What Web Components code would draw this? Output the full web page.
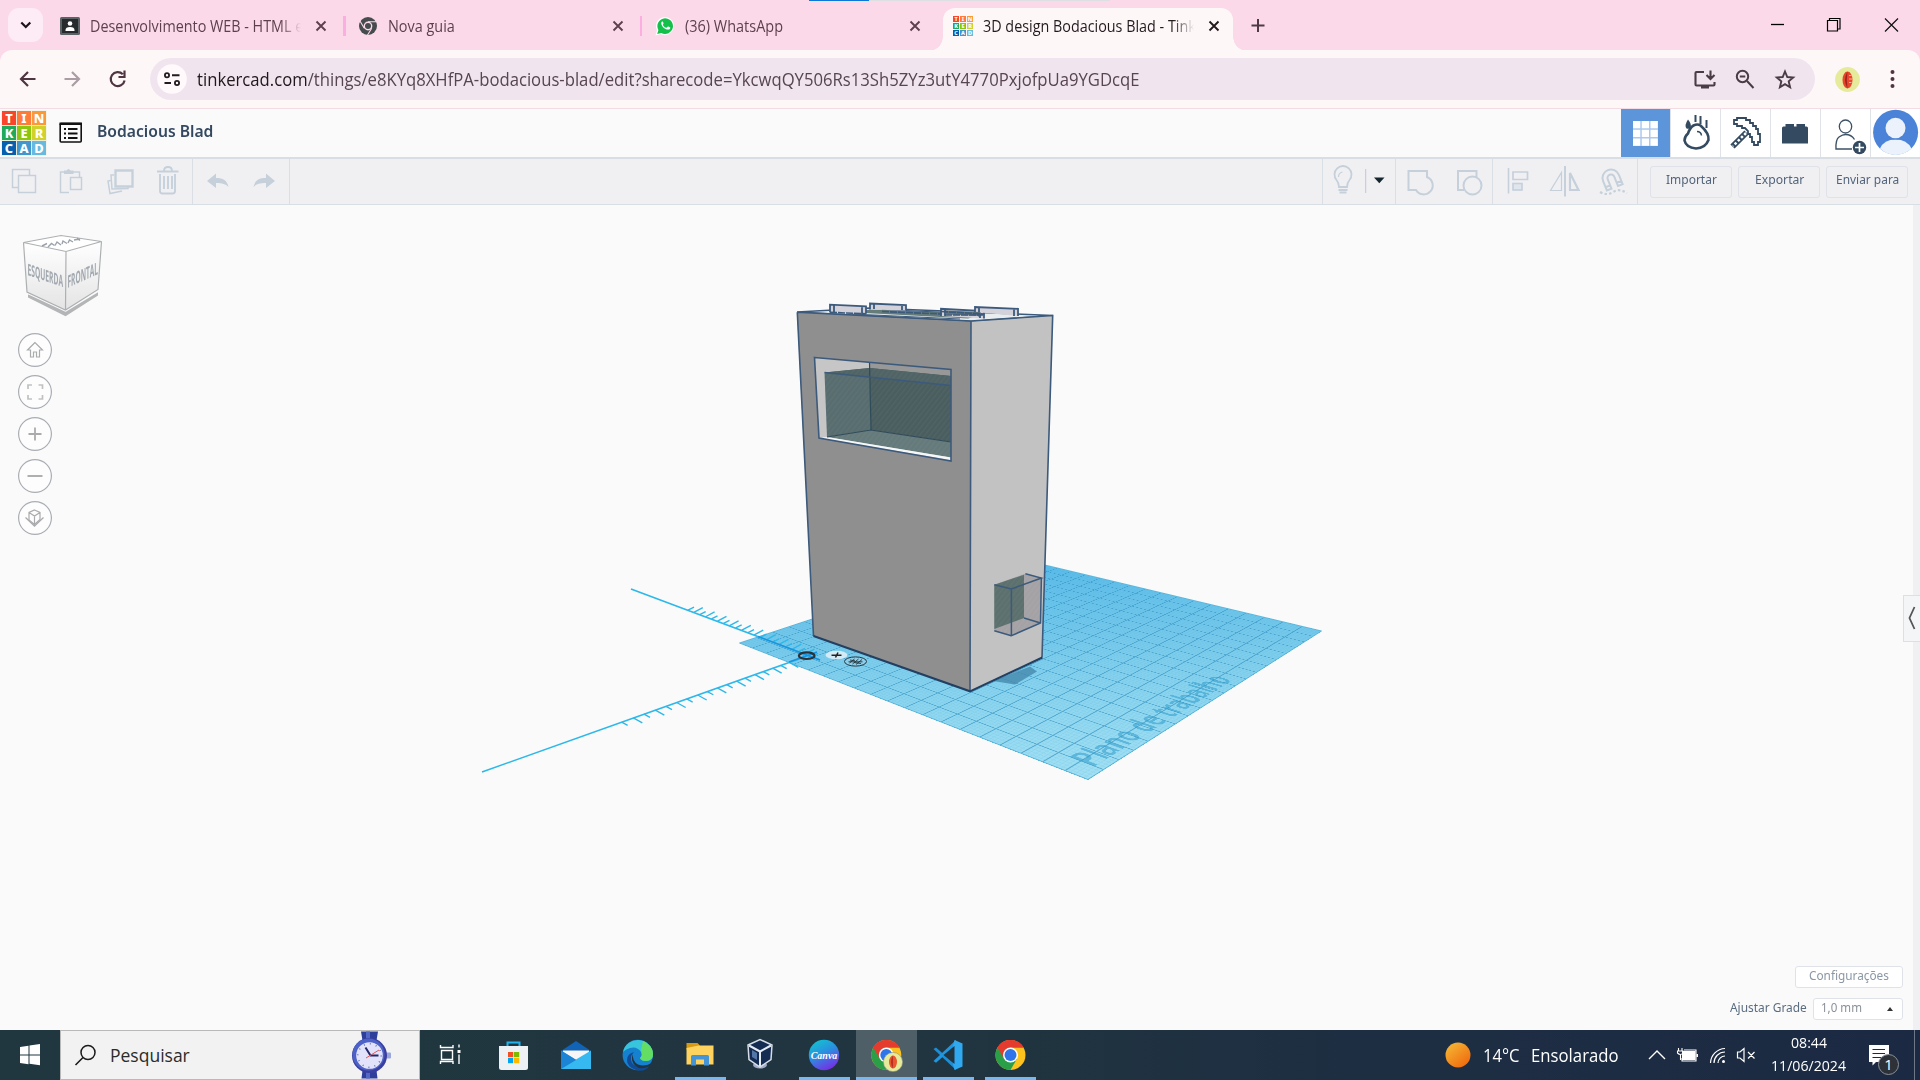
<!DOCTYPE html>
<html lang="pt-BR">
<head>
<meta charset="utf-8">
<title>3D design Bodacious Blad - Tinkercad</title>
<style>
html,body{margin:0;width:1920px;height:1080px;overflow:hidden;background:#fafafa}
body{font-family:"Open Sans","Noto Sans",sans-serif}
</style>
</head>
<body>
<desk-top></desk-top>
<script>
// Each icon: [x, y, width, height, markup]; the markup uses window coordinates.
const tile = (x, y, s, g) => {
  const c = ['#f8452b','#ff7b3a','#fb9a35','#1fa95a','#8cc60f','#d2d12c','#0560b0','#4196ce','#68b9e0'];
  return [...'TINKERCAD'].map((l, i) => {
    const tx = x + (i % 3) * (s + g), ty = y + Math.floor(i / 3) * (s + g);
    return `<rect x="${tx}" y="${ty}" width="${s}" height="${s}" fill="${c[i]}"/><text x="${tx + s / 2}" y="${ty + s * .84}" text-anchor="middle" font-family="Noto Sans,sans-serif" font-weight="800" font-size="${s * .92}" fill="#fff">${l}</text>`;
  }).join('');
};
const chrome = (cx, cy, r) => {
  const p = (a, q) => (cx + q * Math.cos(a * Math.PI / 180)).toFixed(1) + ' ' + (cy + q * Math.sin(a * Math.PI / 180)).toFixed(1);
  return `<circle cx="${cx}" cy="${cy}" r="${r}" fill="#fcc31e"/>
  <path d="M${p(-150, r)}A${r} ${r} 0 0 1 ${p(-30, r)}L${cx} ${cy - r * .5}L${cx} ${cy}Z" fill="#e33b2e"/>
  <path d="M${p(-150, r)}A${r} ${r} 0 0 0 ${p(90, r)}L${p(30, r * .5)}L${cx} ${cy}Z" fill="#2b9e48"/>
  <path d="M${p(-150, r)}L${p(150, r * .5)}L${cx} ${cy}L${p(-90, r * .5)}L${p(-30, r)}A${r} ${r} 0 0 0 ${p(-150, r)}Z" fill="#e33b2e"/>
  <circle cx="${cx}" cy="${cy}" r="${r * .5}" fill="#fff"/><circle cx="${cx}" cy="${cy}" r="${r * .4}" fill="#2f74e8"/>`;
};
const S = (d, w = 2, c = '#c5d0db') => `<path d="${d}" fill="none" stroke="${c}" stroke-width="${w}"/>`;
const close = c => S('M-4.5-4.5L4.5 4.5M4.5-4.5L-4.5 4.5', 1.9, c);
const ICONS = {
  chev: [8, 8, 35, 34, S('M21.3 22.5l4.5 4.5 4.5-4.5', 2.2, '#1c1418')],
  x: [-8, -8, 16, 16, close('#5d3f4d')],
  xd: [-8, -8, 16, 16, close('#231a1e')],
  classroom: [60, 15, 20, 20, `<rect x="60" y="16" width="20" height="18" rx="1.5" fill="#5b6266"/><rect x="62" y="18" width="16" height="14" fill="#262a2c"/><circle cx="70" cy="22.5" r="2.3" fill="#fff"/><path d="M65.5 29q0-3 4.500-3t4.500 3v1h-9z" fill="#fff"/>`],
  chromegray: [358, 15, 20, 20, `<circle cx="368" cy="25" r="9" fill="#464b4e"/><circle cx="368" cy="25" r="4.400" fill="#fbd9e9"/><circle cx="368" cy="25" r="3" fill="#464b4e"/><path d="M368 20.700h8.200M364.300 27.200l-4.200-7M371.700 27.200l-4.300 7" stroke="#fbd9e9" stroke-width="1.100"/>`],
  whats: [655, 15, 20, 20, `<path d="M655.500 34.500l1.500-5.200a9 9 0 1 1 3.600 3.700z" fill="#fff"/><path d="M657.200 33l1.200-4a7.800 7.800 0 1 1 2.900 2.900z" fill="#15c04a"/><path d="M661.500 21c1-1 1.600-.2 2 1.200.4 1-1.200 1-.2 2.500 1 1.300 1.900 1.900 3 2.100 1 0 1-1.700 2-1.200 2 .9 2.500 1.200 1.600 2.300-2.400 2.600-10-2.400-8.400-6.900z" fill="#fff"/>`],
  tinkfav: [953, 14.5, 20, 20, tile(953, 14.5, 6, 1)],
  plus: [1250, 17, 16, 16, S('M1258 19v13M1251.500 25.500h13', 2, '#4f3a44')],
  min: [1771, 15, 14, 20, S('M1771 24.500h13', 1.300, '#000')],
  max: [1826, 15, 15, 20, S('M1827.500 20.500h10v10.500h-10zM1829.500 20.500v-2h10.500v10.500h-2', 1.200, '#000')],
  wclose: [1884, 15, 15, 20, S('M1885 18.500l13 13M1898 18.500l-13 13', 1.200, '#111')],
  back: [18, 69, 20, 20, S('M35.500 79H21M28 72l-7 7 7 7', 2.200, '#4f3541')],
  fwd: [63, 69, 20, 20, S('M64.500 79H79M72 72l7 7-7 7', 2.200, '#aa9da4')],
  reload: [108, 69, 20, 20, S('M122.800 74.200a7 7 0 1 0 1.800 6.300M118.500 77h6v-6.500', 2.200, '#4f3541')],
  site: [156.5, 64, 30, 30, `<circle cx="171.500" cy="79" r="14.800" fill="#fff9fb"/>` + S('M164 83h6.500M171.500 75.200h7.500', 2, '#221b1f') + `<circle cx="166.500" cy="75.200" r="2.100" fill="none" stroke="#221b1f" stroke-width="1.800"/><circle cx="176.500" cy="83" r="2.100" fill="none" stroke="#221b1f" stroke-width="1.800"/>`],
  install: [1693, 68, 24, 22, S('M1704 72h-7.500q-1 0-1 1v11.500q0 1 1 1h17q1 0 1-1V82M1710.500 70.500v8M1706.500 75l4 4 4-4', 2.100, '#4a3b45') + `<path d="M1701 85h8v3.500h-8z" fill="#4a3b45"/>`],
  zoom: [1735, 68, 20, 22, `<circle cx="1742.500" cy="76.500" r="5.700" fill="none" stroke="#4a3b45" stroke-width="2"/>` + S('M1747 81l6.500 7M1739.800 76.500h5.500', 2, '#4a3b45')],
  star: [1774, 68, 22, 22, S('M1785 71.500l2.300 5.500 5.900.5-4.500 3.900 1.400 5.800-5.100-3.100-5.100 3.100 1.400-5.800-4.500-3.900 5.900-.5z', 1.900, '#4a3b45')],
  face: [1835, 66, 25, 25, `<circle cx="1847.500" cy="78.500" r="12.400" fill="#e6ea9b"/><ellipse cx="1847.500" cy="79" rx="5" ry="8.500" fill="#e8452c"/><path d="M1847.500 70.500q-5 8.500 0 17q-1.500-8 0-17" fill="#9d231c"/><path d="M1849 74.500h2.500M1849 78h3M1849 81.500h2.500" stroke="#ffb2a0"/>`],
  dots: [1888, 68, 9, 22, `<g fill="#4f3541"><circle cx="1892.500" cy="72" r="2"/><circle cx="1892.500" cy="79" r="2"/><circle cx="1892.500" cy="86" r="2"/></g>`],
  logo: [0, 109, 48, 48, `<rect x="1.500" y="110.500" width="45" height="45" fill="#e9ecd8"/>` + tile(2, 111, 14, 1)],
  list: [59, 120, 24, 24, `<rect x="60.200" y="122.500" width="21" height="18.500" rx="1" fill="none" stroke="#111" stroke-width="1.600"/><path d="M59.500 121.500h22.500v2.500h-22.500z" fill="#111"/>` + S('M64 128h2M64 132.500h2M64 137h2M68 128h9.500M68 132.500h9.500M68 137h9.500', 2, '#111')],
  copy: [0, 159, 48, 45, S('M18 187.500h-5.500v-18h17v6M18.500 175.500h17v17h-17z', 1.500)],
  paste: [48, 159, 48, 45, S('M69 192.500h-8.500v-20.500h19V177M70.500 177.500h11v12h-11z', 1.500) + '<path d="M64 170.500h2.500q2-3 4 0h3v3.500h-9.500z" fill="#c5d0db"/>'],
  dup: [96, 159, 48, 45, S('M115.500 170.500h17v16h-17z', 2.400) + S('M114 175h-3l1 14 16-.500v-1.500M110.500 180.500l-2.500.500 2 12.500 12-2.500', 1.500)],
  trash: [144, 159, 48, 45, S('M160 174v17q0 2.500 2.500 2.500h10q2.500 0 2.500-2.500v-17M157 171.500h21.500M164 171q0-4 4-4t4 4M164 176v13M168 176v13M172 176v13', 1.900)],
  undo: [193, 159, 48, 45, `<path d="M207 181l9-7.500v4.500c7 0 11 2 12.500 9-3-3-6-4-12.500-4v5z" fill="#c5d0db"/>`],
  redo: [241, 159, 48, 45, `<path d="M275 181l-9-7.500v4.500c-7 0-11 2-12.500 9 3-3 6-4 12.500-4v5z" fill="#c5d0db"/>`],
  bulb: [1324, 159, 42, 45, S('M1340 187q0-4-2.500-7a8.500 8.500 0 1 1 13 0q-2.500 3-2.500 7zM1339.500 190h9M1340.500 192.500h7', 1.800) + S('M1339.500 177q0-4 4-5', 1.200)],
  caret: [1366, 159, 30, 45, S('M1366.500 169v24', 1.500) + '<path d="M1375 177.500h10.500l-5.200 5.800z" fill="#14262e"/>'],
  group: [1396, 159, 48, 45, S('M1408.500 171H1427v6a9 9 0 1 1-11 13h-7.500z', 2)],
  ungroup: [1444, 159, 48, 45, S('M1464 190h-6v-19h18.500v6', 2) + '<circle cx="1472.500" cy="185.500" r="9" fill="none" stroke="#c5d0db" stroke-width="2"/>'],
  align: [1493, 159, 48, 45, S('M1508.500 168v25.500', 1.600) + S('M1513 172h14.500v7.500H1513z', 1.700) + '<rect x="1513" y="183.500" width="9" height="6.500" fill="#e0e6ec" stroke="#c5d0db" stroke-width="1.600"/>'],
  mirror: [1541, 159, 48, 45, S('M1565 166v30.500', 2) + S('M1561.500 172.500v18h-11z', 1.200) + S('M1570 173v17h8.500z', 2.200)],
  magnet: [1589, 159, 48, 45, `<g transform="rotate(-22 1611 178)">` + S('M1602.500 188v-10a8.500 8.500 0 0 1 17 0v10h-5v-10a3.500 3.500 0 0 0-7 0v10zM1602.500 184.500h5M1614.500 184.500h5', 2) + '</g><path d="M1600 192q7 4 13 0t14 1" fill="none" stroke="#c5d0db" stroke-width="2.200" stroke-dasharray="2.500 2.200"/>'],
  grid: [1621, 109, 49, 48, `<path d="M1633 121h25v25h-25z" fill="#a9c7ee"/><g fill="#fff">` + [0,1,2].map(r => [0,1,2].map(c => `<rect x="${1633 + c * 8.75}" y="${121 + r * 8.75}" width="7.300" height="7.300"/>`).join('')).join('') + '</g>'],
  blocks: [1671, 109, 49, 48, `<path d="M1693.500 125.500q4-2 7 0q9 8 8 14.500q-3 8-12.500 8.500q-10-1-11.500-8q0-4 3.500-7q2-6 5.500-8z" fill="none" stroke="#334a60" stroke-width="2.600"/>` + S('M1697 131.500q4 0 4.500 4', 1.500, '#334a60') + S('M1695.500 115v7M1700.500 116v8M1706.500 120v8', 2, '#334a60') + '<path d="M1688 119.500q-4 6-1.500 9q3 1 4-1q1.500-3-2.500-8z" fill="#334a60"/>'],
  pick: [1721, 109, 49, 48, `<g fill="none" stroke="#334a60" stroke-width="1.800"><path d="M1734 120v4h3v2h5v2h3l3 3v3h2v3h2v5h2v3h4v-3h2v-8h-2v-5h-2v-3h-3v-3h-3v-3h-4v-2h-9v2z"/></g><path d="M1746.500 132.500l-14 14" stroke="#334a60" stroke-width="6"/><path d="M1746 133l-13 13" stroke="#fff" stroke-width="2.500" stroke-dasharray="2.500 2"/>`],
  brick: [1771, 109, 49, 48, '<path d="M1782 128q0-1.500 1.500-1.500h2v-2.500h8.500v2.500h2.500v-2.500h8.500v2.500h1.500q1.500 0 1.500 1.500v15.500h-26z" fill="#334a60"/>'],
  invite: [1821, 109, 49, 48, '<ellipse cx="1845.500" cy="126.500" rx="6.200" ry="6.500" fill="none" stroke="#3e5266" stroke-width="1.300"/>' + S('M1852 149h-16q-.5-9.500 3-12t6.500-2.500q6 0 9 5', 1.400, '#3e5266') + '<circle cx="1859.500" cy="147.500" r="6.700" fill="#334a60"/>' + S('M1859.500 143v9M1855 147.500h9', 1.700, '#fff')],
  user: [1871, 109, 49, 48, '<circle cx="1895.600" cy="132.300" r="22.500" fill="#4a83d8"/><path d="M1880 148.500q4-9 15.500-9t16 9q-7 6.500-16 6.500t-15.500-6.500z" fill="#ebf2fb"/><ellipse cx="1895.500" cy="128" rx="11.200" ry="11.500" fill="#4a83d8"/><ellipse cx="1895.500" cy="128" rx="10" ry="10.300" fill="#ebf2fb"/>'],
  home: [18, 333, 34, 34, S('M35 342.500l-7.500 7.500h3v7h3v-5h3v5h3v-7h3z', 1.200, '#aaabad')],
  fit: [18, 375, 34, 34, S('M28 389v-4h4M38.500 385h4v4M42.500 395v4h-4M32 399h-4v-4', 1.700, '#bfc1c3')],
  zin: [18, 417, 34, 34, S('M28.500 434h13M35 427.500v13', 1.800, '#aaabad')],
  zout: [18, 459, 34, 34, S('M27.500 476h15', 1.900, '#aaabad')],
  ortho: [18, 501, 34, 34, S('M34.500 510l5.500 2.500v7l-5.500 5-5.500-4.500v-7.500zM29 512.500l5.500 3.500 5.500-3.500M34.500 516v9', 1.200, '#aaabad') + S('M25.500 517.500l9 8.500 9-8.500', 1.300, '#aaabad')],
  start: [0, 1030, 60, 50, '<path d="M20 1047l8.500-1.200v8.700H20zM29.500 1045.600l10.500-1.500v10.400H29.500zM20 1055.500h8.500v8.700l-8.500-1.200zM29.500 1055.500H40v9.700l-10.500-1.400z" fill="#fff"/>'],
  search: [72, 1031, 26, 48, '<circle cx="88" cy="1052.500" r="7" fill="none" stroke="#1a1a1a" stroke-width="1.500"/>' + S('M83 1057.500l-7.500 7.500', 1.600, '#1a1a1a')],
  watch: [345, 1030.500, 52, 49, `<path d="M361 1031h17l-2 12h-13zM363 1066h13l1.500 12h-16z" fill="#2e3f9b"/><path d="M366 1031h4v12h-4zM366 1067h4v11h-4z" fill="#5367c7"/><rect x="386" y="1052" width="5" height="6" rx="1" fill="#9aa6da"/><circle cx="369.500" cy="1055" r="17.500" fill="#3a3f9f"/><circle cx="368.500" cy="1054" r="16" fill="#4d62c8"/><circle cx="369.500" cy="1055" r="13.300" fill="#e2e3fa"/><circle cx="369.500" cy="1055" r="11.700" fill="none" stroke="#5c6bb8" stroke-width="1.500" stroke-dasharray="1 5.125"/>` + S('M365.500 1047l5 8h8', 2, '#23286c') + S('M366 1057.500l13-8', 1, '#e8584e')],
  task: [420, 1030, 60, 50, S('M440.500 1045v2.500h12.500v-2.500M441.500 1050.500h11v9h-11zM440.500 1064v-2.500h12.500v2.500M459 1044.500v3M459 1054.500v9.500', 1.400, '#fff') + '<path d="M457.500 1050h3v3h-3z" fill="#fff"/>'],
  store: [484, 1030, 60, 50, '<path d="M507.500 1046v-3.500h12v3.500" fill="none" stroke="#25b3ee" stroke-width="2"/><path d="M499 1046h29v21.500q0 2.500-2.500 2.500h-24q-2.500 0-2.500-2.500z" fill="#eef1f3"/><path d="M508 1052h5.200v5.200H508z" fill="#f25022"/><path d="M514 1052h5.200v5.200H514z" fill="#7fba00"/><path d="M508 1058h5.200v5.200H508z" fill="#00a4ef"/><path d="M514 1058h5.200v5.200H514z" fill="#ffb900"/>'],
  mail: [546, 1030, 60, 50, '<path d="M561 1051l15-10 15 10v4h-30z" fill="#1163b5"/><path d="M563 1050.500h26v10h-26z" fill="#f7f5f5"/><path d="M561 1050.500l30 18.500h-30z" fill="#1b90dc"/><path d="M591 1050.500v18.500h-30v-.5z" fill="#35b9f0"/><path d="M561 1050.500l15 9.500-15 9z" fill="#1b84d4"/>'],
  edge: [608, 1030, 60, 50, '<circle cx="637.800" cy="1055" r="15.200" fill="#1681ce"/><path d="M623 1052a15.200 15.200 0 0 1 30 2q0 7-7 7-5 0-6-3 3-2 1-6-4-6-11-4-4 1-7 4z" fill="#38c5dc"/><path d="M643 1041q10 4 10 13 0 7-7 7-5 0-6-3 3-3 1-8z" fill="#63dd62"/><path d="M634 1052q-5 5-2 11 6 7 18 2-5 8-14 5-9-3-9-10 0-6 7-8z" fill="#0f4b98"/><path d="M633 1054q-1 7 5 10.500 6 2.500 13-1-1 2-2 3-9 4-14-1-5-5-2-11.500z" fill="#203540"/>'],
  folder: [670, 1030, 60, 50, '<path d="M686.500 1043h11l2.500 2.500v4h-13.500z" fill="#d89a12"/><path d="M686.500 1048l12-2.500h15v19h-27z" fill="#ffd35e"/><path d="M691 1065.500v-9q0-1.500 1.500-1.500h15q1.500 0 1.500 1.500v9h-5v-6h-8v6z" fill="#4595d6"/>'],
  vbox: [730, 1030, 60, 50, '<ellipse cx="760" cy="1065" rx="7" ry="3.500" fill="#a1acca"/><path d="M748 1045l12-5.500 12 5.500-1 14.500-11 7.500-11-7.500z" fill="#152c52" stroke="#d6dde8" stroke-width="1.500"/><path d="M749 1045.500l11 6 11-6M760 1051.500v14.500" fill="none" stroke="#e5ebf2" stroke-width="2"/><path d="M752 1050l5 3v7l-5-3z" fill="#5377a6"/>'],
  canva: [794, 1030, 60, 50, '<defs><linearGradient id="cv" x1=".2" y1="0" x2=".7" y2="1"><stop stop-color="#12c3d0"/><stop offset=".45" stop-color="#2a8fdf"/><stop offset="1" stop-color="#7a2ae6"/></linearGradient></defs><circle cx="824" cy="1055" r="15.200" fill="url(#cv)"/><text x="824" y="1058.500" text-anchor="middle" font-family="Liberation Serif,serif" font-style="italic" font-weight="700" font-size="10" fill="#fff">Canva</text>'],
  chrome1: [856, 1030, 61, 50, chrome(886.3, 1055, 15) + '<circle cx="893" cy="1062" r="9.600" fill="#e6ea9b" stroke="#8f9480" stroke-width=".6"/><ellipse cx="893" cy="1062" rx="4" ry="6.500" fill="#e8552f"/><path d="M893 1055.500q-4 6.500 0 13z" fill="#b92e20"/>'],
  code: [918, 1030, 60, 50, '<g transform="translate(-.5 0)"><path d="M934 1049l2.500-1.500 20 17.500v5z" fill="#1d8ed6"/><path d="M934 1061l2.500 1.800 20-17.800v-5z" fill="#2196e0"/><path d="M955 1040l8 3.500v23l-8 3.500-1.500-6v-18z" fill="#30a9f0"/><path d="M955 1046v18l-11-9z" fill="#203540"/></g>'],
  chrome2: [980, 1030, 60, 50, chrome(1010.5, 1055, 15)],
  sun: [1445, 1040, 26, 30, '<defs><linearGradient id="sn" x1="0" y1="0" x2=".8" y2="1"><stop stop-color="#f5bd38"/><stop offset="1" stop-color="#f0690d"/></linearGradient></defs><circle cx="1458" cy="1055" r="12.500" fill="url(#sn)"/>'],
  up: [1647, 1040, 20, 30, S('M1649 1059l8-8 8 8', 1.400, '#fff')],
  batt: [1675, 1040, 26, 30, '<path d="M1682 1051h13.500v9h-13.500zM1696.500 1054h1.500v3h-1.500z" fill="#fff"/>' + S('M1684 1050h12v11h-14v-3M1678.500 1048v3M1682 1048v3M1677.500 1051h5.500v2q-2.500 3-5.500 0zM1680.500 1054v6', 1.100, '#fff')],
  wifi: [1707, 1040, 22, 30, '<circle cx="1723.500" cy="1061.500" r="1.500" fill="#fff"/>' + S('M1710.500 1063a15 15 0 0 1 14.500-14.500M1714 1063a11 11 0 0 1 11-11M1718 1063a7 7 0 0 1 7-7', 1.200, '#fff')],
  vol: [1735, 1040, 24, 30, S('M1737.500 1052h2.500l4-3.500v13l-4-3.500h-2.500zM1748 1052l6.500 6.500M1754.500 1052l-6.500 6.500', 1.200, '#fff')],
  notif: [1864, 1034, 40, 46, '<path d="M1869 1045h20v17h-13l-3.500 3.500V1062h-3.500z" fill="#fff"/>' + S('M1872.500 1049.500h12.500M1872.500 1053.500h12.500M1872.500 1057.500h9', 1.200, '#1d2b42') + '<circle cx="1888.500" cy="1064.500" r="10" fill="#2d3239" stroke="#8b9098"/><text x="1888.500" y="1070" text-anchor="middle" font-family="Open Sans,sans-serif" font-size="15" fill="#fff">1</text>'],
};

class Piece extends HTMLElement {
  constructor() {
    super();
    this.attachShadow({ mode: 'open' }).innerHTML = `<style>:host{display:block;box-sizing:border-box}*{box-sizing:border-box}${this.constructor.css || ''}</style>${this.constructor.html || ''}`;
  }
}
const def = (n, c) => customElements.define(n, c);

def('ui-icon', class extends Piece {
  static css = ':host{flex:none}svg{display:block}';
  connectedCallback() {
    const [x, y, w, h, m] = ICONS[this.getAttribute('name')];
    this.shadowRoot.innerHTML += `<svg width="${w}" height="${h}" viewBox="${x} ${y} ${w} ${h}">${m}</svg>`;
  }
});

// A single line of text fitted to a fixed width.
def('fit-text', class extends Piece {
  static css = ':host{flex:none;white-space:nowrap}span{display:inline-block;transform-origin:0 50%}';
  static html = '<span><slot></slot></span>';
  connectedCallback() {
    const w = +this.getAttribute('w'), s = this.shadowRoot.querySelector('span');
    s.style.transform = `scaleX(${w / s.offsetWidth})`;
    this.style.width = w + 'px';
  }
});

def('browser-tab', class extends Piece {
  static css = `:host{width:297.500px;height:50px;position:relative;font-size:15.500px;color:#5d3f4d;flex:none}
  .row{position:relative;height:50px;display:flex;align-items:center;padding:1px 0 0 13px}
  .label{width:213px;margin-left:10px;line-height:26px;height:26px}
  .label.fade{-webkit-mask:linear-gradient(90deg,#000 190px,transparent 211px)}
  .x{margin-left:10px;flex:none;width:16px}
  .sep{width:2.500px;height:20px;background:#fcaee0;margin-left:14px;flex:none}
  :host([last]) .sep,:host([active]) .sep{visibility:hidden}
  :host([active]){color:#231a1e}
  :host([active]) .bg{position:absolute;left:3px;top:7.500px;width:290px;height:43px;background:#fef7f8;border-radius:12px 12px 0 0}
  :host([active]) .bg::before,:host([active]) .bg::after{content:"";position:absolute;bottom:0;width:14px;height:14px}
  :host([active]) .bg::before{left:-14px;background:radial-gradient(circle at 0 0,transparent 13.500px,#fef7f8 14px)}
  :host([active]) .bg::after{right:-14px;background:radial-gradient(circle at 100% 0,transparent 13.500px,#fef7f8 14px)}`;
  connectedCallback() {
    const a = this.hasAttribute('active');
    this.shadowRoot.innerHTML += `<div class="bg"></div><div class="row"><ui-icon name="${this.getAttribute('icon')}"></ui-icon><div class="label ${this.hasAttribute('long') ? 'fade' : ''}"><fit-text w="${this.getAttribute('w')}">${this.getAttribute('label')}</fit-text></div><ui-icon class="x" name="${a ? 'xd' : 'x'}"></ui-icon><div class="sep"></div></div>`;
  }
});

def('browser-chrome', class extends Piece {
  static css = `:host{height:109px;background:#fbd9e9}
  .tabs{display:flex;height:50px;align-items:center;position:relative}
  .chev{background:#fdecf5;border-radius:11px;margin:0 4px 0 8px}
  .load{position:absolute;left:809px;top:0;width:301px;height:1px;background:linear-gradient(90deg,#0b78d8 60px,#dedfe2 60px)}
  .bar{display:flex;height:59px;background:#fef7f8;border-bottom:1px solid #f3dbe4;border-radius:12px 12px 0 0;align-items:center}
  .omni{display:flex;align-items:center;width:1665px;height:42px;border-radius:21px;background:#f0e5ee;margin-left:22px;padding-left:6.500px;color:#574551;font-size:18px}
  b{font-weight:400;color:#1f171b}`;
  static html = `<div class="tabs"><ui-icon class="chev" name="chev"></ui-icon>
  <browser-tab long icon="classroom" w="213" label="Desenvolvimento WEB - HTML e"></browser-tab>
  <browser-tab icon="chromegray" w="67" label="Nova guia"></browser-tab>
  <browser-tab last icon="whats" w="98" label="(36) WhatsApp"></browser-tab>
  <browser-tab active long icon="tinkfav" w="213" label="3D design Bodacious Blad - Tink"></browser-tab>
  <ui-icon name="plus" style="margin-left:13px"></ui-icon>
  <ui-icon name="min" style="margin-left:505px"></ui-icon><ui-icon name="max" style="margin-left:41px"></ui-icon><ui-icon name="wclose" style="margin-left:43px"></ui-icon>
  <div class="load"></div></div>
  <div class="bar"><ui-icon name="back" style="margin-left:18px"></ui-icon><ui-icon name="fwd" style="margin-left:25px"></ui-icon><ui-icon name="reload" style="margin-left:25px"></ui-icon>
  <div class="omni"><ui-icon name="site"></ui-icon><fit-text w="942.5" style="margin-left:10px"><b>tinkercad.com</b>/things/e8KYq8XHfPA-bodacious-blad/edit?sharecode=YkcwqQY506Rs13Sh5ZYz3utY4770PxjofpUa9YGDcqE</fit-text>
  <ui-icon name="install" style="margin-left:554px"></ui-icon><ui-icon name="zoom" style="margin-left:18px"></ui-icon><ui-icon name="star" style="margin-left:19px"></ui-icon></div>
  <ui-icon name="face" style="margin-left:20px"></ui-icon><ui-icon name="dots" style="margin-left:28px"></ui-icon></div>`;
});

def('design-header', class extends Piece {
  static css = `:host{display:flex;height:48px;background:#fafafa;align-items:center;color:#344961}
  .t{font:600 15.800px/22px "Noto Sans",sans-serif;margin:-5px 0 0 13.500px}
  .modes{display:flex;margin-left:auto;background:#fff}.modes ui-icon+ui-icon{border-left:1px solid #dfe2e6;width:50px}
  .on{background:#5c95da}`;
  static html = `<ui-icon name="logo"></ui-icon><ui-icon name="list" style="margin-left:11px"></ui-icon><fit-text class="t" w="116">Bodacious Blad</fit-text>
  <div class="modes"><ui-icon class="on" name="grid"></ui-icon><ui-icon name="blocks"></ui-icon><ui-icon name="pick"></ui-icon><ui-icon name="brick"></ui-icon><ui-icon name="invite"></ui-icon><ui-icon name="user"></ui-icon></div>`;
});

def('tool-button', class extends Piece {
  static css = `:host{display:flex;width:82px;height:32px;border:1px solid #dfe2e8;border-radius:3px;align-items:center;justify-content:center;font:12.700px/20px "Noto Sans",sans-serif;color:#52647a;padding-bottom:5px;flex:none}`;
  static html = '<slot></slot>';
});

def('edit-toolbar', class extends Piece {
  static css = `:host{display:flex;height:48px;background:#f0f0f3;border-top:2px solid #d9dee5;border-bottom:1px solid #d9dde4}
  .g{display:flex;border-right:1px solid #dadee5}.r{margin-left:auto;border-left:1px solid #dadee5}
  .b{display:flex;gap:6px;align-items:center;width:282px;padding-left:12px}`;
  static html = `<div class="g"><ui-icon name="copy"></ui-icon><ui-icon name="paste"></ui-icon><ui-icon name="dup"></ui-icon><ui-icon name="trash"></ui-icon></div>
  <div class="g"><ui-icon name="undo"></ui-icon><ui-icon name="redo"></ui-icon></div>
  <div class="g r"><ui-icon name="bulb"></ui-icon><ui-icon name="caret"></ui-icon></div>
  <div class="g"><ui-icon name="group"></ui-icon><ui-icon name="ungroup"></ui-icon></div>
  <div class="g"><ui-icon name="align"></ui-icon><ui-icon name="mirror"></ui-icon><ui-icon name="magnet"></ui-icon></div>
  <div class="b"><tool-button><fit-text w="51">Importar</fit-text></tool-button><tool-button><fit-text w="49">Exportar</fit-text></tool-button><tool-button><fit-text w="63">Enviar para</fit-text></tool-button></div>`;
});

// The work plane: a flat 800x800 square projected onto four scene corners.
def('work-plane', class extends Piece {
  static css = `:host{position:absolute;left:0;top:0;width:800px;height:800px;transform-origin:0 0}svg{display:block}`;
  connectedCallback() {
    let g = '';
    for (let i = 0; i <= 20; i++) g += `M${i * 40} 0V800M0 ${i * 40}H800`;
    let m = '';
    for (let i = 0; i <= 100; i++) m += `M${i * 8} 0V800M0 ${i * 8}H800`;
    this.shadowRoot.innerHTML += `<svg width="800" height="800" viewBox="0 0 800 800"><defs><linearGradient id="g" x1="1" y1="0" x2="0" y2="1"><stop stop-color="#55b8e8"/><stop offset=".5" stop-color="#74c8ea"/><stop offset="1" stop-color="#a2e0f3"/></linearGradient></defs>
    <rect width="800" height="800" fill="url(#g)"/><path d="${m}" stroke="#4aaedb" stroke-width=".8" opacity=".3"/><path d="${g}" stroke="#2687b8" stroke-width="2.400" opacity=".5"/>
    <text x="36" y="784" textLength="424" lengthAdjust="spacingAndGlyphs" font-family="Noto Sans,sans-serif" font-weight="600" font-size="62" fill="#2f9ccb" opacity=".55">Plano de trabalho</text></svg>`;
    const p = this.getAttribute('corners').trim().split(/[ ,]+/).map(Number);
    const [x0, y0, x1, y1, x2, y2, x3, y3] = p;
    const dx1 = x1 - x2, dx2 = x3 - x2, sx = x0 - x1 + x2 - x3;
    const dy1 = y1 - y2, dy2 = y3 - y2, sy = y0 - y1 + y2 - y3;
    const D = dx1 * dy2 - dx2 * dy1;
    const gg = (sx * dy2 - dx2 * sy) / D, hh = (dx1 * sy - sx * dy1) / D, n = 800;
    const a = (x1 - x0 + gg * x1) / n, b = (x3 - x0 + hh * x3) / n, d = (y1 - y0 + gg * y1) / n, e = (y3 - y0 + hh * y3) / n;
    this.style.transform = `matrix3d(${a},${d},0,${gg / n},${b},${e},0,${hh / n},0,0,1,0,${x0},${y0},0,1)`;
  }
});

def('model-scene', class extends Piece {
  static css = `:host{position:absolute;inset:0}svg{position:absolute;left:0;top:0}`;
  connectedCallback() {
    let r = '';
    [455,490,522,556,588,620,650,683,712,742,770,800,825,855,880,908,932,958].forEach((X, i) => {
      const x = 470 + X / 3, y = 772 - (x - 482) * .357;
      r += i % 2 ? `M${x} ${y}l9 5` : `M${x} ${y}l6 3.200`;
    });
    for (let i = 0; i < 21; i++) {
      const x = 688 + i * 5.8 + i * i * .02, y = 589 + (x - 631) * .372;
      r += i % 2 ? `M${x} ${y}l9-4.800` : `M${x} ${y}l6-3`;
    }
    const L = '#3c5a7c';
    this.shadowRoot.innerHTML += `<work-plane corners="739,438 1005,350.500 1322,426 1088,575"></work-plane>
    <svg width="1913" height="825" viewBox="0 205 1913 825"><defs>
      <pattern id="h" width="4" height="4" patternUnits="userSpaceOnUse" patternTransform="rotate(38)"><path d="M0 0v4" stroke="#fff" stroke-width="2.500" opacity=".035"/></pattern>
      <linearGradient id="c" x1="0" y1="0" x2="0" y2="1"><stop stop-color="#fff"/><stop offset="1" stop-color="#e4e4e5"/></linearGradient></defs>
    <path d="M739.500 643L1088 779.500L1321.500 631L1005 555.500z" fill="none" stroke="#5fb9de" stroke-width="1"/>
    <path d="M993 681l22 3.500 22-13-7-5z" fill="#4588ad" opacity=".8"/>
    <path d="M631 589L820 660M482 772L806 656.500l10-4" fill="none" stroke="#2db8ea" stroke-width="1.600"/><path d="${r}" stroke="#2db8ea" stroke-width="1.400" fill="none"/>
    <path d="M758 636.500l62 23.500M789 662l28-10" stroke="#1c93dd" stroke-width="1.500"/>
    <ellipse cx="806.700" cy="655.700" rx="7.800" ry="3.300" fill="none" stroke="#2b3338" stroke-width="2.200"/>
    <ellipse cx="836.500" cy="655" rx="11" ry="4.300" fill="#d3ebf6"/><path d="M831.500 655.300h10M838 652.500l-2.500 5" stroke="#222" stroke-width="1.500"/>
    <ellipse cx="855.500" cy="661.500" rx="11" ry="4.600" fill="#8ccde9" stroke="#26343d" stroke-width="1"/><path d="M849.500 663l5-4M852.500 664l6-5M856 664.500l6-5M850 660l5 .8M854 662.500l7 1M848.500 661.800h14" stroke="#26343d" stroke-width=".9"/>

    <path d="M797 312L870 308L1053 315.500L971 321.500z" fill="#e8edf0" stroke="${L}" stroke-width="1.500"/>
    <path d="M846 312L872 309.500L985 314L968 318.500z" fill="#657c78"/><path d="M852 314l108 5M882 309.500l100 4.500" stroke="${L}" stroke-width="1.200"/>
    <path d="M797 312.500L971 321.500L970 691L813.500 636z" fill="#8f8f8f"/>
    <path d="M971 321.500L1053 315.500L1042 657.500L970 691z" fill="#c2c2c2"/>
    <path d="M797.300 312.200L971 321L1052.700 315.500L1042 657.500M971 321L970 691M797.300 312.200L813.500 636" fill="none" stroke="${L}" stroke-width="1.600"/>
    <path d="M813.500 636L970 691.300L1042.300 657.500" fill="none" stroke="#233f61" stroke-width="2"/>
    <g fill="#d3d2da" stroke="${L}" stroke-width="1.800"><path d="M830 312.500v-7.800l36 1.600v7.500M834 305v7M862 307v7"/><path d="M870 309.500v-6l36 1.500v5.500M874 304v5M902 305v5"/><path d="M941 316v-7.200l43 2.200v7.500M945 309v7M980 311v7"/><path d="M975 312v-5l43 1.800v7.200M979 307.500v9M1014 309v7"/></g>
    <path d="M946 310.500l34 1.500v4l-34-1.500z" fill="#5f747a"/>
    <path d="M830 312.300l36 1.500M941 311.500l43 2.500M882 311.500l60 2.500M945 315h38" stroke="${L}" stroke-width="1.600" stroke-dasharray="7 1"/>

    <path d="M814.500 357.500L951 369.500V461L819 438z" fill="#c6c6c6"/>
    <path d="M869.500 362L951 369.500V377L869.500 369z" fill="#989898"/>
    <path d="M824.500 372.500L869.500 368L871 430L827 437z" fill="#586d6f"/>
    <path d="M869.500 368L951 376V442L871 430z" fill="#4a5e60"/>
    <path d="M824.500 372.500L869.500 368L951 376V385.500z" fill="#506365"/>
    <path d="M827 437L871 430L951 442V457.500z" fill="#657a7b"/>
    <path d="M819 438l8-1L951 457.500V460z" fill="#f6f8f8"/>
    <path d="M824.500 372.500L869.500 368L951 376V457L827 437z" fill="url(#h)"/>
    <path d="M869.500 362L871 430L951 442M871 430L827 437" fill="none" stroke="#2f4a58" stroke-width="1.200"/>
    <path d="M824.500 372.500L951 385.500" stroke="${L}" stroke-width="1.300"/>
    <path d="M814.500 357.500L951 369.500V461L819 438z" fill="none" stroke="${L}" stroke-width="1.600"/>

    <path d="M994.300 584.700L1025.400 573.700L1041.400 578L1040.500 623L1011.400 635.700L994.300 630.700z" fill="#a5a2a5"/>
    <path d="M994.300 584.700L1024 574.700V618L994.300 629z" fill="#5c706e"/>
    <path d="M994.300 584.700L1025.400 573.700L1041.400 578L1040.500 623L1011.400 635.700L994.300 630.700z" fill="url(#h)"/>
    <path d="M994.300 584.700L1011.400 589L1041.400 578L1025.400 573.700M1041.400 578L1040.500 623L1011.400 635.700V589M1011.400 635.700L994.300 630.700M1024 618l16.500 5" fill="none" stroke="${L}" stroke-width="1.500"/>

    <path d="M29 296L65.500 313L97 294v1L65.500 315L29 297z" fill="#b4b5b6" stroke="#b4b5b6" stroke-width="2"/>
    <path d="M23.500 242.500L61 235.500L101.500 241.500L66 251.500z" fill="#fff"/><path d="M23.500 242.500L66 251.500L65.500 310L27 292z" fill="url(#c)"/><path d="M101.500 241.500L66 251.500L65.500 310L98 289.500z" fill="url(#c)"/>
    <path d="M23.500 242.500L61 235.500L101.500 241.500L66 251.500zL27 292L65.500 310L98 289.500L101.500 241.500M66 251.500L65.500 310" fill="none" stroke="#adb0b2" stroke-width="1.200"/>
    <g font-family="Open Sans,sans-serif" font-weight="700" fill="#a2a8af">
    <text font-size="16" transform="matrix(1 .34 0 1 27.500 275)" textLength="35.500" lengthAdjust="spacingAndGlyphs">ESQUERDA</text>
    <text font-size="17" transform="matrix(1 -.46 0 1 67.500 288)" textLength="30.500" lengthAdjust="spacingAndGlyphs">FRONTAL</text></g>
    <path d="M42 246l5-2.500M48 247l3.500-3.500 3 2M55 245.500l2-3.500 4 3M62 244l1-3 4 2.500M68 243l1.500-3 3.500 2M74 240l6-1M77 238l3 2.500" fill="none" stroke="#9ba2aa" stroke-width="1.400"/>
    </svg>`;
  }
});

def('round-button', class extends Piece {
  static css = ':host{width:34px;height:34px;border-radius:50%;background:#fdfdfd;box-shadow:inset 0 0 0 1.200px #a9adb3}';
  connectedCallback() { this.shadowRoot.innerHTML += `<ui-icon name="${this.getAttribute('icon')}"></ui-icon>`; }
});

def('design-canvas', class extends Piece {
  static css = `:host{height:825px;position:relative;background:#fafafa;overflow:hidden;font:12.700px/20px "Noto Sans",sans-serif}
  nav{position:absolute;left:18px;top:128px;display:flex;flex-direction:column;gap:8px}
  .edge{position:absolute;right:0;top:0;width:7px;height:825px;background:#f0f0f3}
  .handle{position:absolute;right:0;top:390px;width:17px;height:47px;background:#f4f5f7;border:1px solid #dcdfe6;border-right:0}
  .handle svg{display:block}
  .foot{position:absolute;right:17px;bottom:10px;display:flex;flex-direction:column;gap:10px;align-items:flex-end}
  .cfg,.sel{background:#fff;border:1px solid #dfe2e8;border-radius:3px;height:22px;display:flex;align-items:center;color:#8b97a5}
  .cfg{width:108px;padding:0 0 4px 13px}.row{display:flex;gap:6px;color:#5a6c80;height:22px;align-items:center}.row>fit-text{margin-top:-5px}
  .sel{width:90px;padding:0 9px 5px 7px;justify-content:space-between;color:#8a9099}
  .sel svg{margin-top:5px}`;
  static html = `<model-scene></model-scene><nav><round-button icon="home"></round-button><round-button icon="fit"></round-button><round-button icon="zin"></round-button><round-button icon="zout"></round-button><round-button icon="ortho"></round-button></nav>
  <div class="edge"></div><div class="handle"><svg width="16" height="45"><path d="M10.500 11L5.500 22l5 11" fill="none" stroke="#555" stroke-width="1.800"/></svg></div>
  <div class="foot"><div class="cfg"><fit-text w="80">Configurações</fit-text></div><div class="row"><fit-text w="77">Ajustar Grade</fit-text><div class="sel"><fit-text w="41">1,0 mm</fit-text><svg width="6" height="4"><path d="M0 4L3 0l3 4z" fill="#333"/></svg></div></div></div>`;
});

def('task-item', class extends Piece {
  static css = `:host{flex:none;height:50px;position:relative}
  :host([open])::after{content:"";position:absolute;bottom:0;left:5px;right:4px;height:3px;background:#76b9f0}
  :host([current]){background:#4e5f68}:host([current])::after{left:0;right:0}`;
  connectedCallback() { this.shadowRoot.innerHTML += `<ui-icon name="${this.getAttribute('icon')}"></ui-icon>`; }
});

def('task-bar', class extends Piece {
  static css = `:host{display:flex;height:50px;background:linear-gradient(90deg,#203740,#20353f 50%,#1e2e42 70%,#1b2a42);color:#fff;font-size:17.500px;align-items:center}
  .s{display:flex;align-items:center;width:360px;height:50px;background:#f2f2f2;border:1px solid #b9b9b9;color:#2b2b2b;padding-left:11px}
  .clock{display:flex;flex-direction:column;align-items:center;width:75px;font-size:14.500px;line-height:23px;margin:0 0 2px 12px}
  .end{width:1px;height:50px;background:#6d7788;margin-left:10px}`;
  static html = `<task-item icon="start"></task-item><div class="s"><ui-icon name="search"></ui-icon><fit-text w="80" style="margin-left:12px">Pesquisar</fit-text><ui-icon name="watch" style="margin-left:155px"></ui-icon></div>
  <task-item icon="task"></task-item><task-item icon="store" style="margin-left:4px"></task-item><task-item icon="mail" style="margin-left:2px"></task-item><task-item icon="edge" style="margin-left:2px"></task-item><task-item open icon="folder" style="margin-left:2px"></task-item><task-item icon="vbox"></task-item><task-item open icon="canva" style="margin-left:4px"></task-item><task-item open current icon="chrome1" style="margin-left:2px"></task-item><task-item open icon="code" style="margin-left:1px"></task-item><task-item open icon="chrome2" style="margin-left:2px"></task-item>
  <ui-icon name="sun" style="margin-left:405px"></ui-icon><fit-text w="37" style="margin-left:12px">14°C</fit-text><fit-text w="88" style="margin-left:11px">Ensolarado</fit-text>
  <ui-icon name="up" style="margin-left:28px"></ui-icon><ui-icon name="batt" style="margin-left:8px"></ui-icon><ui-icon name="wifi" style="margin-left:6px"></ui-icon><ui-icon name="vol" style="margin-left:6px"></ui-icon>
  <div class="clock"><fit-text w="36">08:44</fit-text><fit-text w="75">11/06/2024</fit-text></div><ui-icon name="notif" style="margin:4px 0 0 18px"></ui-icon><div class="end"></div>`;
});

def('desk-top', class extends Piece {
  static css = ':host{display:flex;flex-direction:column;width:1920px;height:1080px;overflow:hidden}:host>*{flex:none}';
  static html = '<browser-chrome></browser-chrome><design-header></design-header><edit-toolbar></edit-toolbar><design-canvas></design-canvas><task-bar></task-bar>';
});
</script>
</body>
</html>
